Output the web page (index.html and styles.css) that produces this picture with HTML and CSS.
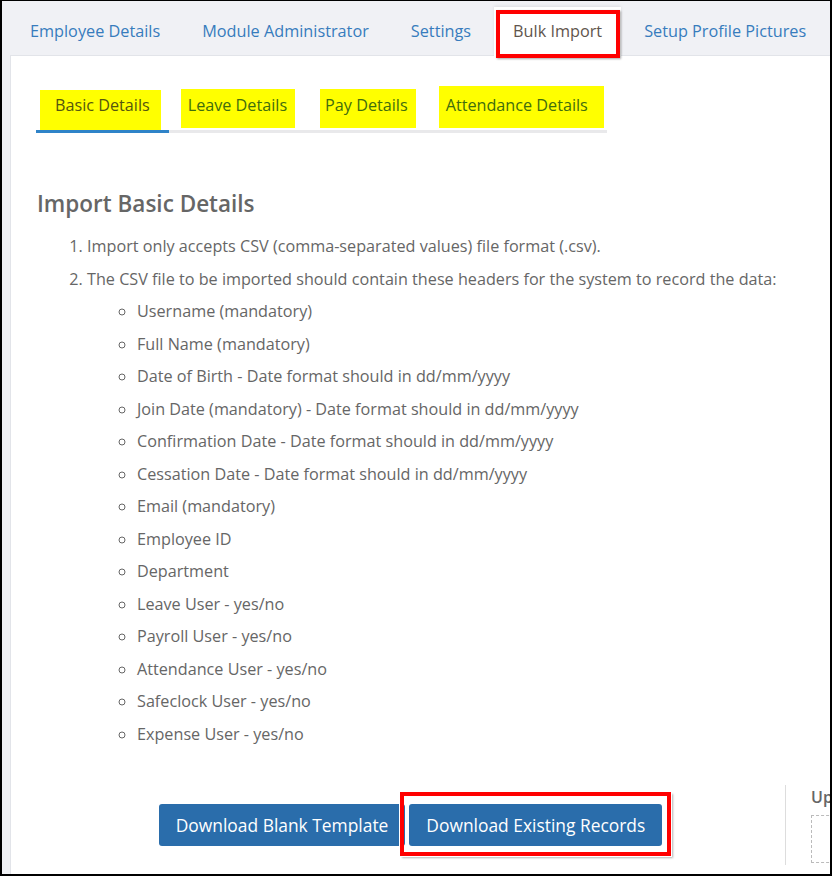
FILE: index.html
```html
<!DOCTYPE html>
<html lang="en">

<head>
  <meta charset="UTF-8">
  <meta name="viewport" content="width=device-width, initial-scale=1.0">
  <title>Bulk Import</title>
  <link rel="stylesheet" href="styles.css">
</head>

<body>
  <div id="frame">
    <div id="tabs">
      <a class="tab">Employee Details</a>
      <a class="tab">Module Administrator</a>
      <a class="tab">Settings</a>
      <a class="tab active marked">Bulk Import</a>
      <a class="tab">Setup Profile Pictures</a>
    </div>

    <div id="panel">
      <ul id="subtabs">
        <li class="sub active"><span class="hl hl-basic">Basic Details</span></li>
        <li class="sub"><span class="hl hl-leave">Leave Details</span></li>
        <li class="sub"><span class="hl hl-pay">Pay Details</span></li>
        <li class="sub"><span class="hl hl-att">Attendance Details</span></li>
      </ul>

      <h2 class="title">Import Basic Details</h2>
      <ol class="rules">
        <li>Import only accepts CSV (comma-separated values) file format (.csv).</li>
        <li>The CSV file to be imported should contain these headers for the system to record the data:
          <ul class="fields">
            <li>Username (mandatory)</li>
            <li>Full Name (mandatory)</li>
            <li>Date of Birth - Date format should in dd/mm/yyyy</li>
            <li>Join Date (mandatory) - Date format should in dd/mm/yyyy</li>
            <li>Confirmation Date - Date format should in dd/mm/yyyy</li>
            <li>Cessation Date - Date format should in dd/mm/yyyy</li>
            <li>Email (mandatory)</li>
            <li>Employee ID</li>
            <li>Department</li>
            <li>Leave User - yes/no</li>
            <li>Payroll User - yes/no</li>
            <li>Attendance User - yes/no</li>
            <li>Safeclock User - yes/no</li>
            <li>Expense User - yes/no</li>
          </ul>
        </li>
      </ol>

      <div id="actions">
        <div class="downloads">
          <button class="btn">Download Blank Template</button>
          <button class="btn marked">Download Existing Records</button>
        </div>
        <div class="upload">
          <div class="upload-label">Upload CSV File</div>
          <div class="dropzone"></div>
        </div>
      </div>
    </div>
  </div>
</body>

</html>
```

FILE: styles.css
```css
body {
  margin: 0;
  font-family: 'Open Sans', 'Noto Sans', sans-serif;
}

#frame {
  width: 832px;
  height: 876px;
  box-sizing: border-box;
  border: 2px solid #000;
  border-top-width: 1px;
  background-color: #f0f1f5;
  overflow: hidden;
}

#tabs {
  display: flex;
  align-items: flex-end;
  height: 54px;
  padding-left: 9px;
}

.tab {
  height: 48px;
  line-height: 48px;
  padding: 0 19px;
  margin-right: 4px;
  font-size: 16.25px;
  color: #377cbd;
  white-space: nowrap;
}

.tab.active {
  position: relative;
  z-index: 1;
  height: 49px;
  margin-bottom: -1px;
  background-color: #fff;
  color: #5f554d;
  box-shadow: 0 -1px 3px rgba(0, 0, 0, 0.08);
}

.tab.marked::after {
  content: '';
  position: absolute;
  top: 3px;
  left: 2px;
  right: 1px;
  bottom: -2px;
  border: 4px solid #f00;
  box-shadow: 1px 1px 2px rgba(0, 0, 0, 0.35);
}

#panel {
  margin-left: 8px;
  width: 1100px;
  height: 900px;
  background-color: #fff;
  border-top: 1px solid #e2e4e9;
  border-left: 1px solid #e2e4e9;
  padding: 30px 0 0 25px;
}

#subtabs {
  display: inline-flex;
  align-items: flex-end;
  list-style: none;
  margin: 0;
  padding: 0;
  border-bottom: 3px solid #e9e9eb;
}

.sub {
  padding: 0 19px;
  border-bottom: 3px solid transparent;
  margin-bottom: -3px;
  font-size: 16.2px;
  line-height: 22px;
  color: #3f6d0e;
}

.sub.active {
  border-bottom-color: #2f83c8;
  color: #55560f;
}

.hl {
  display: block;
  background-color: #ffff00;
}

.hl-basic {
  padding: 4px 11px 14px 15px;
  margin: 0 -11px 0 -15px;
}

.hl-leave {
  padding: 5px 8px 12px 7px;
  margin: 0 -8px 2px -7px;
}

.hl-pay {
  padding: 5px 8px 12px 5px;
  margin: 0 -8px 2px -5px;
}

.hl-att {
  padding: 8px 16px 12px 7px;
  margin: 0 -16px 2px -7px;
}

.title {
  margin: 58px 0 13px 1px;
  font-size: 22.5px;
  line-height: 26px;
  font-weight: 600;
  color: #666;
}

.rules {
  margin: 0;
  padding-left: 51px;
  width: 760px;
  font-size: 16.2px;
  line-height: 32.5px;
  color: #666;
}

.fields {
  list-style: circle;
  margin: 0;
  padding-left: 50px;
}

#actions {
  display: flex;
  margin-top: 35px;
}

.downloads {
  width: 749px;
  display: flex;
  justify-content: center;
  align-items: center;
  gap: 4px;
}

.btn {
  position: relative;
  height: 42px;
  padding: 0 17px;
  border: none;
  border-radius: 3px;
  background-color: #2a6dab;
  color: #fff;
  font-family: 'Open Sans', 'Noto Sans', sans-serif;
  font-size: 17.4px;
}

.btn.marked::after {
  content: '';
  position: absolute;
  top: -12px;
  left: -9px;
  right: -9px;
  bottom: -10px;
  border: 4px solid #f00;
  box-shadow: 0 0 0 1px #fff, 2px 2px 2px rgba(0, 0, 0, 0.3);
}

.upload {
  height: 80px;
  border-left: 1px solid #ddd;
  padding-left: 25px;
  width: 300px;
}

.upload-label {
  margin-top: 1px;
  line-height: 22px;
  font-size: 16px;
  font-weight: 600;
  color: #666;
}

.dropzone {
  margin-top: 7px;
  height: 46px;
  border: 1px dashed #bbb;
}
```
